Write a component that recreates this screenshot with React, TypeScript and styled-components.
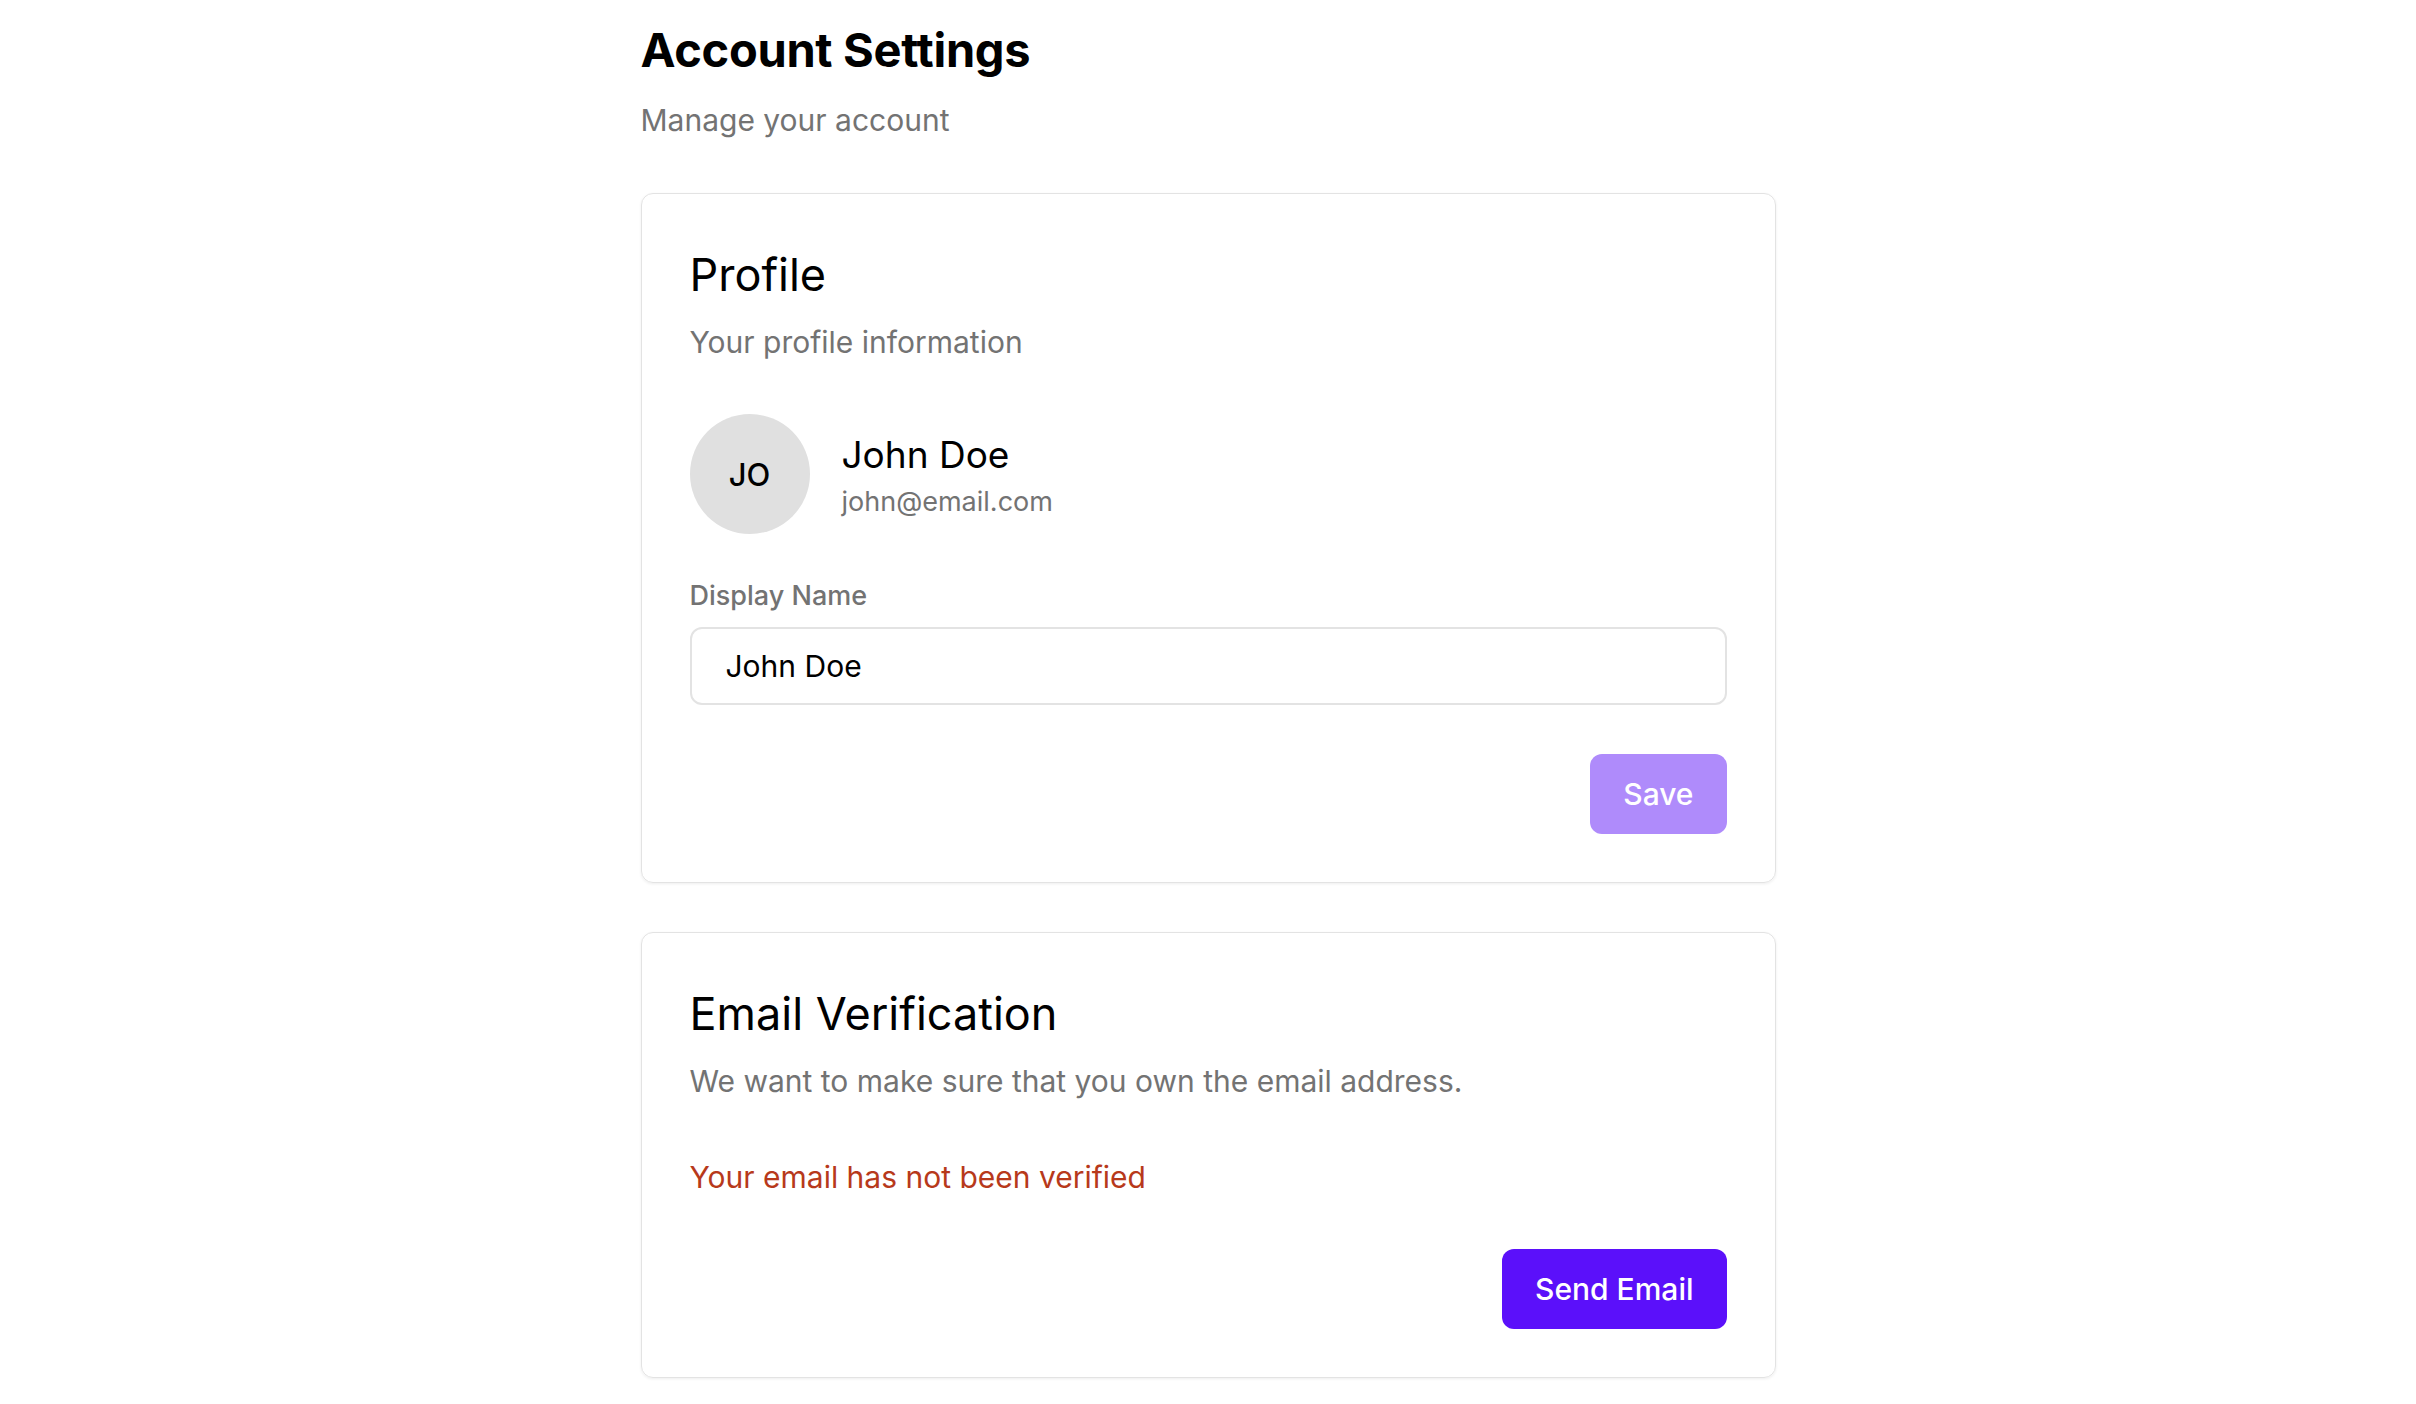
import React, { useState } from "react";
import styled, { createGlobalStyle } from "styled-components";

const GlobalStyle = createGlobalStyle`
  body {
    margin: 0;
    background: #ffffff;
    font-family: Inter, "Noto Sans", "Liberation Sans", sans-serif;
    color: #000000;
  }
`;

const Page = styled.main`
  width: 1135px;
  margin: 0 auto;
  padding: 22px 0 24px;
`;

const PageTitle = styled.h1`
  margin: 0;
  font-size: 47px;
  line-height: 56px;
  font-weight: 700;
  letter-spacing: -0.3px;
`;

const PageSubtitle = styled.p`
  margin: 24px 0 0;
  font-size: 30px;
  line-height: 36px;
  color: #737373;
`;

const Card = styled.section`
  margin-top: 55px;
  padding: 48px;
  border: 1px solid #e3e3e3;
  border-radius: 12px;
  box-shadow: 0 1px 3px rgba(0, 0, 0, 0.07);

  & + & {
    margin-top: 49px;
  }
`;

const CardTitle = styled.h2`
  margin: 0;
  font-size: 45px;
  line-height: 66px;
  font-weight: 400;
`;

const CardDescription = styled.p`
  margin: 16px 0 0;
  font-size: 30px;
  line-height: 36px;
  color: #737373;
`;

const ProfileRow = styled.div`
  margin-top: 54px;
  display: flex;
  align-items: center;
  gap: 32px;
`;

const Avatar = styled.div`
  width: 120px;
  height: 120px;
  border-radius: 50%;
  background: #e0e0e0;
  display: flex;
  align-items: center;
  justify-content: center;
  font-size: 31px;
  font-weight: 500;
`;

const ProfileText = styled.div`
  display: flex;
  flex-direction: column;
  gap: 9px;
  padding-top: 2px;
`;

const ProfileName = styled.div`
  font-size: 37px;
  line-height: 44px;
`;

const ProfileEmail = styled.div`
  font-size: 27px;
  line-height: 32px;
  color: #737373;
`;

const Field = styled.label`
  margin-top: 46px;
  display: flex;
  flex-direction: column;
  gap: 15px;
`;

const FieldLabel = styled.span`
  font-size: 27px;
  line-height: 32px;
  font-weight: 500;
  color: #737373;
`;

const TextInput = styled.input`
  box-sizing: border-box;
  width: 100%;
  height: 78px;
  padding: 0 34px;
  border: 2px solid #e3e3e3;
  border-radius: 12px;
  font-family: inherit;
  font-size: 30px;
  color: #000000;
  outline: none;
`;

const Actions = styled.div<{ $gap: number }>`
  margin-top: ${({ $gap }) => $gap}px;
  display: flex;
  justify-content: flex-end;
`;

const Button = styled.button`
  height: 80px;
  padding: 0 33px;
  border: none;
  border-radius: 12px;
  background: #5b10fa;
  color: #ffffff;
  font-family: inherit;
  font-size: 30px;
  font-weight: 500;
  cursor: pointer;

  &:disabled {
    background: #af8bfb;
    cursor: default;
  }
`;

const Warning = styled.p`
  margin: 60px 0 0;
  font-size: 30px;
  line-height: 36px;
  color: #b7391b;
`;

export default function App(): JSX.Element {
  const user = { name: "John Doe", email: "john@email.com" };
  const [displayName, setDisplayName] = useState(user.name);
  const initials = user.name.slice(0, 2).toUpperCase();

  return (
    <>
      <GlobalStyle />
      <Page>
        <PageTitle>Account Settings</PageTitle>
        <PageSubtitle>Manage your account</PageSubtitle>

        <Card>
          <CardTitle>Profile</CardTitle>
          <CardDescription>Your profile information</CardDescription>
          <ProfileRow>
            <Avatar>{initials}</Avatar>
            <ProfileText>
              <ProfileName>{user.name}</ProfileName>
              <ProfileEmail>{user.email}</ProfileEmail>
            </ProfileText>
          </ProfileRow>
          <Field>
            <FieldLabel>Display Name</FieldLabel>
            <TextInput
              value={displayName}
              onChange={(e) => setDisplayName(e.target.value)}
            />
          </Field>
          <Actions $gap={49}>
            <Button disabled={displayName === user.name}>Save</Button>
          </Actions>
        </Card>

        <Card>
          <CardTitle>Email Verification</CardTitle>
          <CardDescription>
            We want to make sure that you own the email address.
          </CardDescription>
          <Warning>Your email has not been verified</Warning>
          <Actions $gap={54}>
            <Button>Send Email</Button>
          </Actions>
        </Card>
      </Page>
    </>
  );
}
